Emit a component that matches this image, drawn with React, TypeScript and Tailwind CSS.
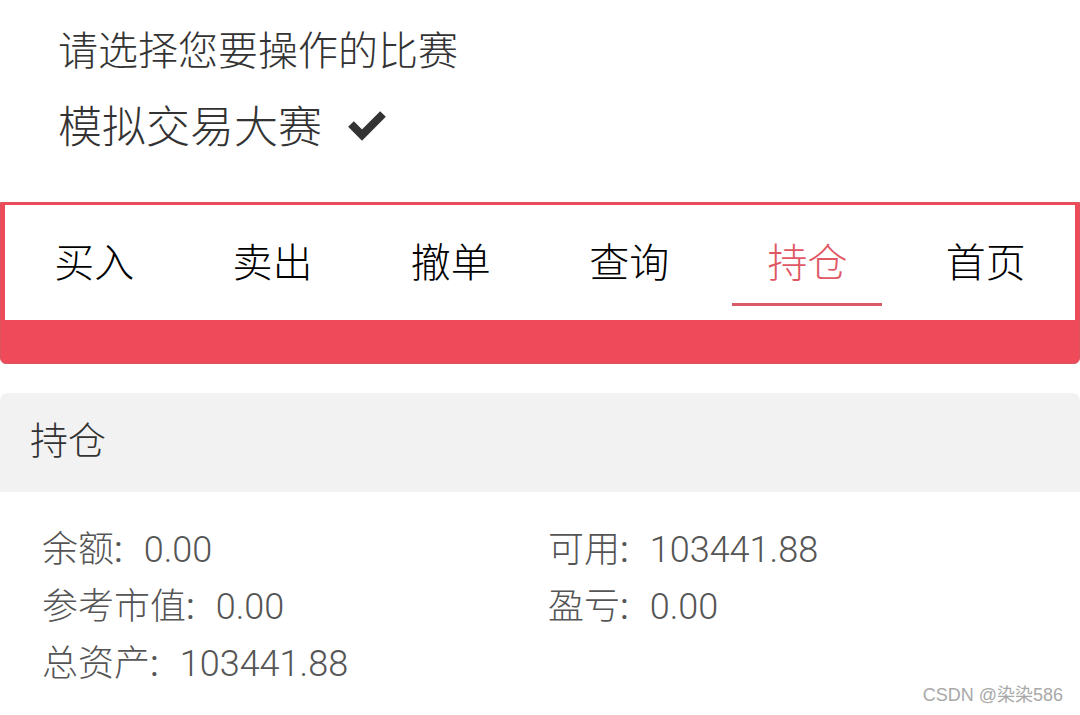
const tabs = ['买入', '卖出', '撤单', '查询', '持仓', '首页'];
const active = '持仓';

const rows: [string, string][] = [
  ['余额', '0.00'],
  ['可用', '103441.88'],
  ['参考市值', '0.00'],
  ['盈亏', '0.00'],
  ['总资产', '103441.88'],
];

function Check() {
  return (
    <svg width="40" height="34" viewBox="0 0 40 34" aria-hidden="true">
      <polyline points="4,17 15,28 36,7" fill="none" stroke="#333333" strokeWidth="8" strokeLinejoin="miter" />
    </svg>
  );
}

export default function App() {
  const cjk = { fontFamily: '"Noto Sans CJK SC", sans-serif' };
  return (
    <div
      className="relative w-[1080px] h-[715px] overflow-hidden bg-white"
      style={{ fontFamily: 'Roboto, "Noto Sans CJK SC", sans-serif' }}
    >
      <div className="pl-[58px] pt-[23px]">
        <div className="text-[40px] leading-[50px] font-light text-[#333333]" style={cjk}>
          请选择您要操作的比赛
        </div>
        <div className="mt-[26px] flex items-center h-[50px] gap-[25px]">
          <span className="text-[44px] leading-[50px] font-light text-[#333333]" style={cjk}>
            模拟交易大赛
          </span>
          <Check />
        </div>
      </div>

      <div className="mt-[53px] bg-[#ef4a59] border border-[#d9545f] rounded-b-[6px] pt-[2px] px-[4px] pb-[43px]">
        <div className="bg-white flex h-[115px]">
          {tabs.map((t) => {
            const isActive = t === active;
            return (
              <div key={t} className="relative flex-1 flex items-center justify-center pb-[5px]">
                <span
                  className={`text-[40px] leading-[40px] font-light ${isActive ? 'text-[#e05864]' : 'text-black'}`}
                  style={cjk}
                >
                  {t}
                </span>
                {isActive && <span className="absolute bottom-[14px] left-1/2 -translate-x-1/2 w-[150px] h-[3px] bg-[#d95a66]" />}
              </div>
            );
          })}
        </div>
      </div>

      <div className="mt-[29px] h-[99px] bg-[#f2f2f2] rounded-t-[8px] flex items-center pl-[30px] pb-[10px]">
        <span className="text-[38px] leading-[40px] font-light text-[#333333]" style={cjk}>
          持仓
        </span>
      </div>

      <div className="pt-[26px] pl-[42px] grid grid-cols-[506px_1fr] text-[36px] leading-[57px] font-light text-[#555555]">
        {rows.map(([label, value]) => (
          <div key={label} className="flex items-baseline h-[57px]">
            <span style={cjk}>{label}</span>
            <span className="font-normal">:</span>
            <span className="ml-[21px]">{value}</span>
          </div>
        ))}
      </div>

      <div className="absolute right-[17px] bottom-[8px] text-[18px] leading-[24px] text-[#a8a8a8]" style={{ fontFamily: '"Liberation Sans", "Noto Sans CJK SC", sans-serif' }}>
        CSDN @染染586
      </div>
    </div>
  );
}
